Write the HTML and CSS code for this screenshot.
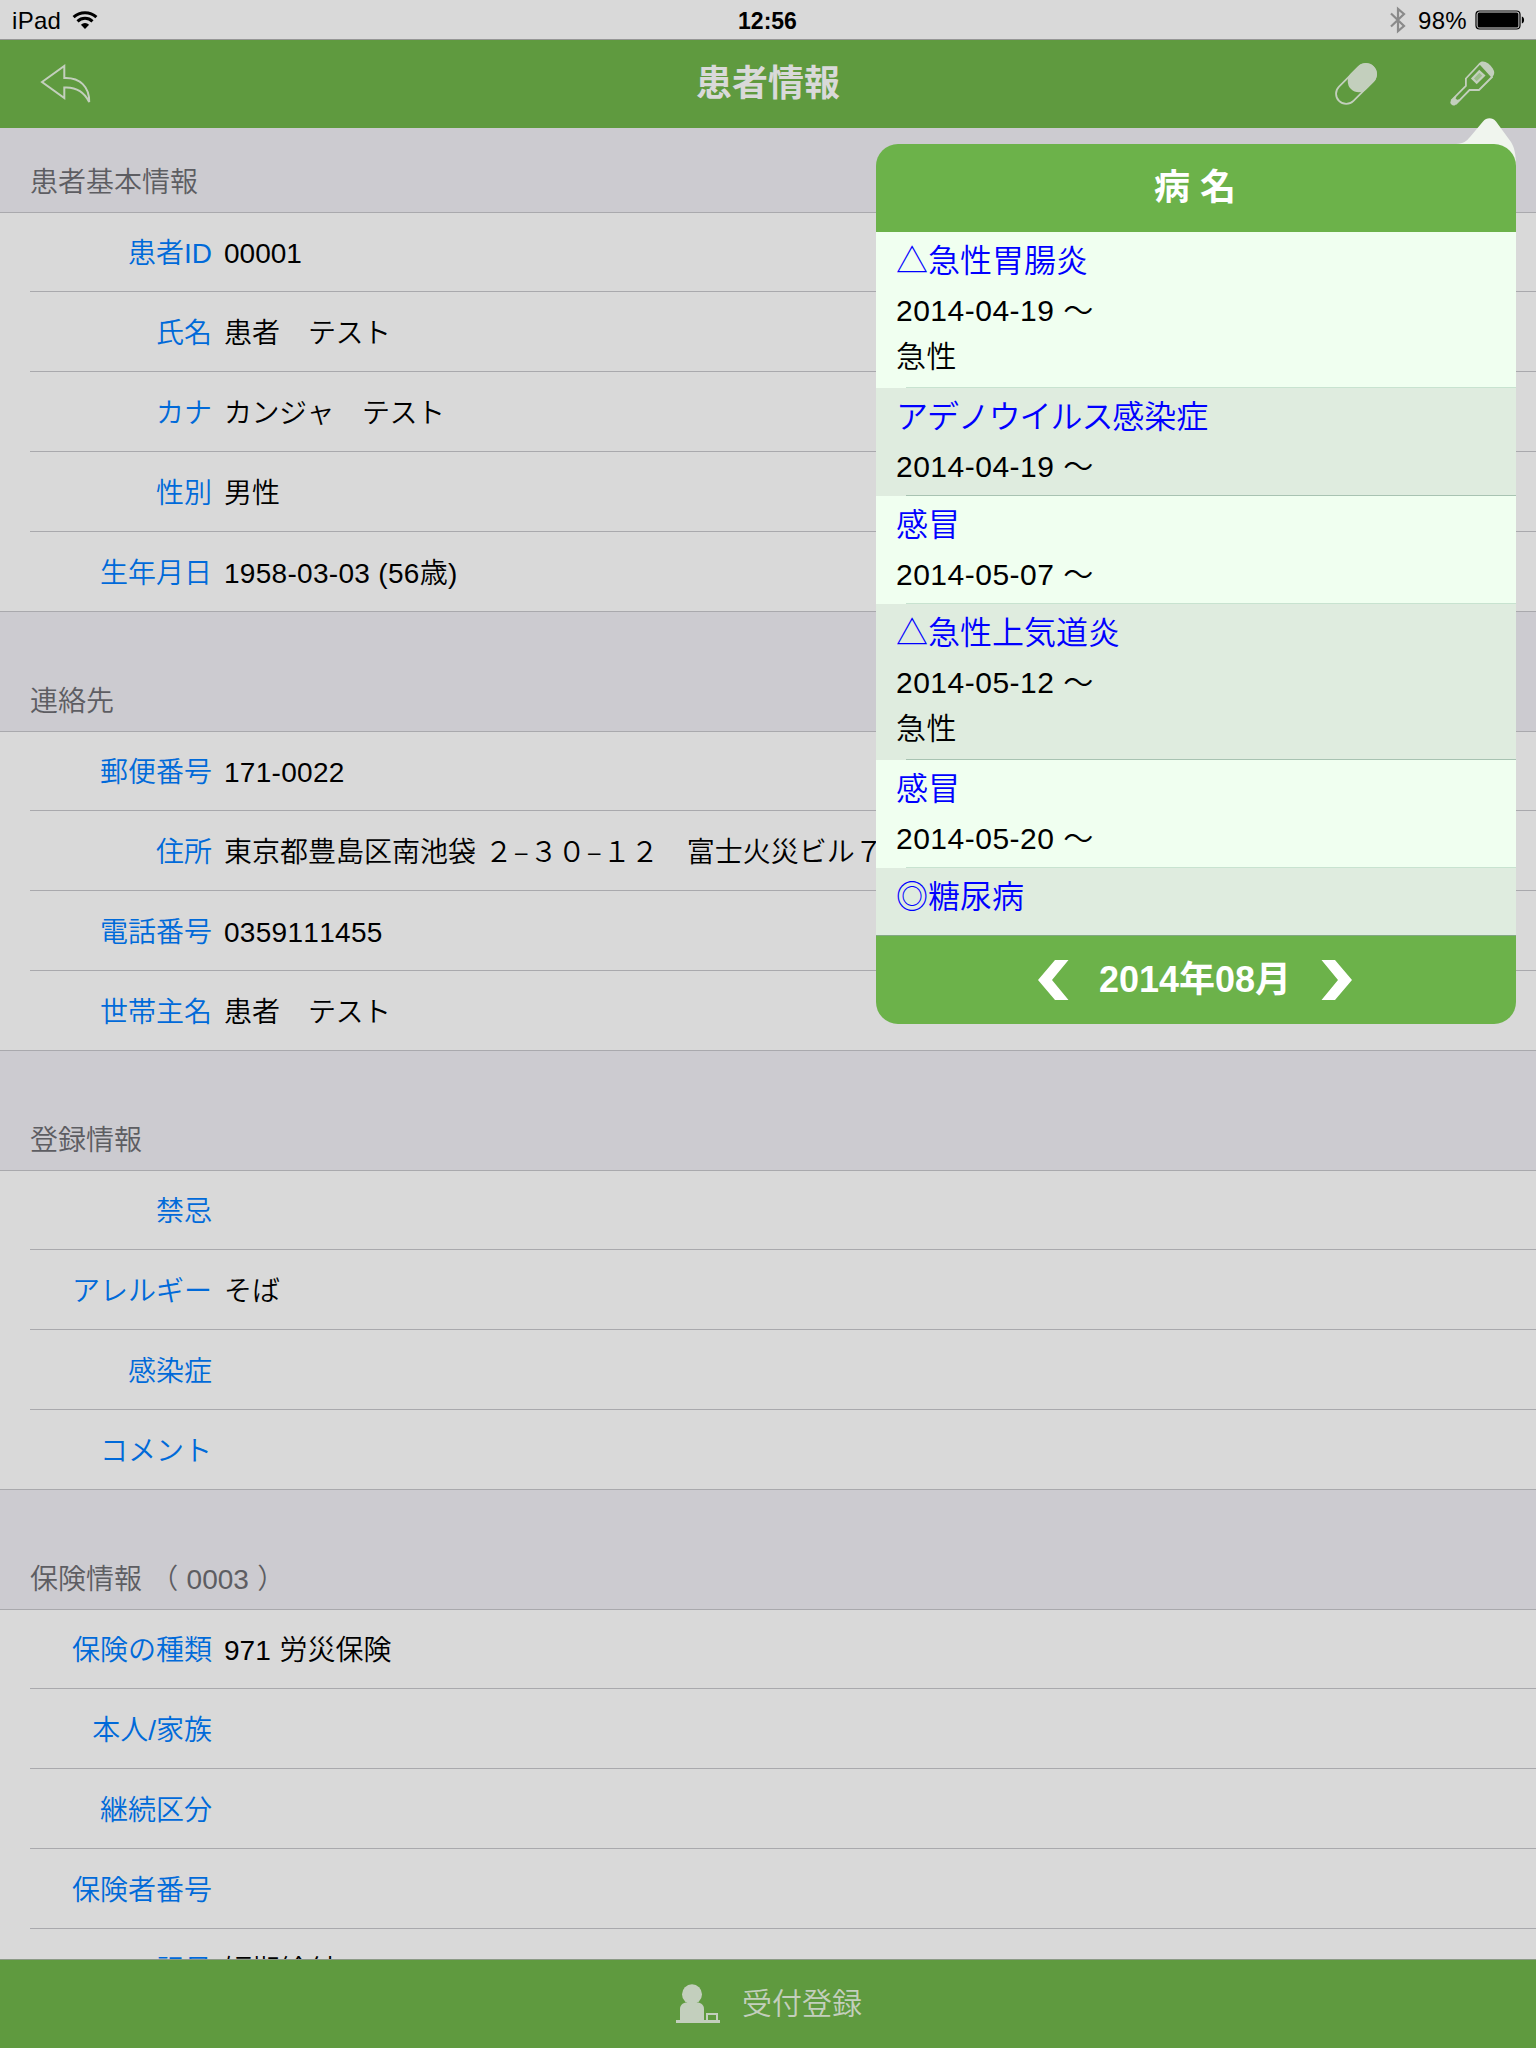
FILE: index.html
```html
<!DOCTYPE html>
<html lang="ja">
<head>
    <meta charset="UTF-8">
    <meta name="viewport" content="width=device-width, initial-scale=1.0">
    <title>患者情報</title>
    <link rel="stylesheet" href="styles.css">
</head>
<body>

    <div class="status-bar">
        <div class="status-left">
            <span>iPad</span>
            <svg class="wifi" width="26" height="20" viewBox="0 0 26 20">
                <path d="M1.6 7.2a16.5 16.5 0 0 1 22.8 0" fill="none" stroke="#000" stroke-width="3"/>
                <path d="M5.5 11.3a10.8 10.8 0 0 1 15 0" fill="none" stroke="#000" stroke-width="3"/>
                <path d="M8.9 14.7a6 6 0 0 1 8.2 0L13 19z"/>
            </svg>
        </div>
        <div class="clock">12:56</div>
        <div class="status-right">
            <svg class="bluetooth" width="16" height="28" viewBox="0 0 16 28">
                <path d="M1 7.500L14 20l-6 5.200V2.800L14 8 1 20.500" fill="none" stroke="#8a8a8a" stroke-width="2.200"/>
            </svg>
            <span>98%</span>
            <svg class="battery" width="50" height="20" viewBox="0 0 50 20">
                <rect x="1" y="1" width="44" height="18" rx="3.5" fill="none" stroke="#000" stroke-width="1.2"/>
                <rect x="2.6" y="2.6" width="40.8" height="14.8" rx="1.5"/>
                <path d="M46.8 6.5c3 .8 3 6.2 0 7z"/>
            </svg>
        </div>
    </div>

    <div class="nav-bar">
        <svg class="back" width="52" height="40" viewBox="0 0 52 40">
            <path d="M2 18L24.300 2v12C40 13.300 49.500 23 49.200 38C44 27.500 36 22.800 24.300 23.500V34z" fill="none" stroke="#c3cfbd" stroke-width="2"/>
        </svg>
        <h1>患者情報</h1>
        <div class="nav-icons">
            <svg class="pill" width="42" height="42" viewBox="0 0 42 42">
                <g transform="rotate(-45 21 21)">
                    <rect x="-3" y="10.800" width="48" height="20.400" rx="10.200" fill="none" stroke="#c3cfbd" stroke-width="1.800"/>
                    <path d="M25 9.900h10a11.100 11.100 0 0 1 0 22.200h-10a11.100 11.100 0 0 1 0-22.200z" fill="#c3cfbd"/>
                </g>
            </svg>
            <svg class="thermometer" width="46" height="46" viewBox="0 0 46 46">
                <g fill="none" stroke="#c3cfbd" stroke-width="1.800">
                    <path d="M31 2.500L16.900 17.500V25L2.300 39.600"/>
                    <path d="M43.500 15.500L30 29h-9.500L6.700 43.200"/>
                </g>
                <path d="M29.700 2.500C31.500.3 34 0 36.500 1c4 1.800 7 5 8.500 9 .8 2.500-.5 5-2.300 6.800z" fill="#c3cfbd"/>
                <path d="M1.800 39.600l4.400-4.400 4.400 4.400-4.200 4.400a3.300 3.300 0 0 1-4.600-4.400z" fill="#c3cfbd"/>
                <path d="M6.500 37.300l1.800 1.800 9-9.200-1.800-1.800z" fill="#5f9a3f"/>
                <path d="M30.300 10.200l4.700 4.400-7.300 7.200-4.300-4.300z" fill="#9cbe8a" stroke="#c3cfbd" stroke-width="2.200"/>
            </svg>
        </div>
    </div>

    <div class="content">
        <h2 class="first">患者基本情報</h2>
        <div class="group">
            <div class="row"><label>患者ID</label><span>00001</span></div>
            <div class="row"><label>氏名</label><span>患者　<span class="kana">テスト</span></span></div>
            <div class="row"><label>カナ</label><span><span class="kana">カンジャ</span>　<span class="kana">テスト</span></span></div>
            <div class="row"><label>性別</label><span>男性</span></div>
            <div class="row"><label>生年月日</label><span class="num">1958-03-03 (56歳)</span></div>
        </div>

        <h2>連絡先</h2>
        <div class="group">
            <div class="row"><label>郵便番号</label><span class="num">171-0022</span></div>
            <div class="row"><label>住所</label><span>東京都豊島区南池袋 <span class="banchi">２<i>–</i>３０<i>–</i>１２</span>　富士火災ビル７</span></div>
            <div class="row"><label>電話番号</label><span class="num">0359111455</span></div>
            <div class="row"><label>世帯主名</label><span>患者　<span class="kana">テスト</span></span></div>
        </div>

        <h2>登録情報</h2>
        <div class="group">
            <div class="row"><label>禁忌</label><span></span></div>
            <div class="row"><label>アレルギー</label><span>そば</span></div>
            <div class="row"><label>感染症</label><span></span></div>
            <div class="row"><label>コメント</label><span></span></div>
        </div>

        <h2>保険情報 （ 0003 ）</h2>
        <div class="group">
            <div class="row"><label>保険の種類</label><span>971 労災保険</span></div>
            <div class="row"><label>本人/家族</label><span></span></div>
            <div class="row"><label>継続区分</label><span></span></div>
            <div class="row"><label>保険者番号</label><span></span></div>
            <div class="row"><label>記号</label><span>短期給付</span></div>
        </div>
    </div>

    <div class="tool-bar">
        <svg class="reception" width="44" height="40" viewBox="0 0 44 40">
            <g fill="#c3cfbd">
                <circle cx="16" cy="10.300" r="10"/>
                <path d="M4 36V25c0-4 3-6.500 7-6.500h10c4 0 7 2.500 7 6.500v11z"/>
                <path d="M0 36h44v3H0z"/>
            </g>
            <path d="M31 37v-7h10v7" fill="none" stroke="#c3cfbd" stroke-width="2"/>
        </svg>
        <span>受付登録</span>
    </div>

    <div class="popover">
        <svg class="arrow" width="60" height="56" viewBox="0 0 60 56">
            <path d="M0 26C8 25.500 10 23.500 14 19L27 3.500C30.500-.8 36.500-.8 40 3.500L55 24C58 29 60 34 60 50L40 30z" fill="#f0f5ee"/>
        </svg>
        <div class="popover-box">
            <div class="popover-title">病 名</div>
            <div class="diseases">
                <div class="disease">
                    <h3>△急性胃腸炎</h3>
                    <p>2014-04-19 〜</p>
                    <p>急性</p>
                </div>
                <div class="disease">
                    <h3><span class="kana">アデノウイルス</span>感染症</h3>
                    <p>2014-04-19 〜</p>
                </div>
                <div class="disease">
                    <h3>感冒</h3>
                    <p>2014-05-07 〜</p>
                </div>
                <div class="disease">
                    <h3>△急性上気道炎</h3>
                    <p>2014-05-12 〜</p>
                    <p>急性</p>
                </div>
                <div class="disease">
                    <h3>感冒</h3>
                    <p>2014-05-20 〜</p>
                </div>
                <div class="disease">
                    <h3>◎糖尿病</h3>
                    <p>2014-05-20 〜</p>
                </div>
            </div>
            <div class="popover-footer">
                <svg width="31" height="40" viewBox="0 0 31 40"><path d="M17 0h13.500L14 20l16.500 20H17L0 20z" fill="#fff"/></svg>
                <span>2014年08月</span>
                <svg width="31" height="40" viewBox="0 0 31 40"><path d="M14 0H.5L17 20 .5 40H14l17-20z" fill="#fff"/></svg>
            </div>
        </div>
    </div>

</body>
</html>
```
FILE: styles.css
```css
* {
    box-sizing: border-box;
}
body {
    margin: 0;
    width: 1536px;
    height: 2048px;
    overflow: hidden;
    position: relative;
    display: flex;
    flex-direction: column;
    background: #cccbd0;
    font-family: "Liberation Sans", "Noto Sans CJK JP", sans-serif;
    font-size: 28px;
    font-kerning: none;
    color: #000;
}
h1, h2, h3, p {
    margin: 0;
    font-weight: normal;
}
svg {
    display: block;
    flex: none;
}

/* status bar */
.status-bar {
    flex: none;
    display: grid;
    grid-template-columns: 1fr auto 1fr;
    align-items: center;
    height: 40px;
    padding: 1px 11px 0 12px;
    background: #d9d9d9;
    border-bottom: 1px solid #969696;
    font-size: 24px;
}
.status-left, .status-right {
    display: flex;
    align-items: center;
}
.status-left span, .status-right span {
    letter-spacing: 0.3px;
    padding-top: 2px;
}
.wifi {
    margin-left: 11px;
}
.clock {
    padding: 2px 2px 0 0;
    font-weight: bold;
    font-size: 23px;
}
.status-right {
    justify-content: flex-end;
}
.bluetooth {
    margin-right: 12px;
}
.battery {
    margin-left: 8px;
}

/* navigation bar */
.nav-bar {
    flex: none;
    display: grid;
    grid-template-columns: 1fr auto 1fr;
    align-items: center;
    height: 88px;
    padding: 0 40px;
    background: #5f9a3f;
}
.nav-bar h1 {
    font-size: 36px;
    font-weight: bold;
    line-height: 88px;
    color: #d9d9d9;
}
.nav-icons {
    display: flex;
    justify-content: flex-end;
    align-items: center;
    padding: 0 1px 1px 0;
}
.thermometer {
    margin-left: 72px;
}

/* patient list */
.content {
    flex: 1;
    min-height: 0;
    overflow: hidden;
}
.content h2 {
    height: 119px;
    padding: 70px 0 0 30px;
    font-size: 28px;
    font-weight: 350;
    line-height: 40px;
    word-spacing: 0.5px;
    color: #5d5d62;
}
.content h2.first {
    height: 84px;
    padding-top: 35px;
}
.group {
    background: #d9d9d9;
    box-shadow: inset 0 1px #a9a9ad, inset 0 -1px #a9a9ad;
}
.row {
    display: flex;
    height: 80px;
    margin-left: 30px;
    padding-top: 4px;
    border-bottom: 1px solid #a9a9ad;
    font-weight: 350;
    line-height: 76px;
    word-spacing: 1px;
    white-space: nowrap;
}
.row label {
    width: 182px;
    margin-right: 12px;
    text-align: right;
    color: #006ad9;
}
.kana {
    letter-spacing: -0.5px;
}
.num {
    letter-spacing: 0.3px;
    word-spacing: 0;
}
.banchi i {
    font-family: "Noto Sans CJK JP", sans-serif;
    font-style: normal;
    line-height: 0;
    padding: 0 1px;
}

/* bottom bar */
.tool-bar {
    flex: none;
    display: flex;
    justify-content: center;
    align-items: center;
    height: 89px;
    padding-left: 2px;
    background: #5f9a3f;
    border-top: 1px solid #8c9a86;
    color: #c3cfbd;
    font-size: 30px;
    font-weight: 350;
    line-height: 84px;
}
.reception {
    margin-right: 22px;
}

/* disease popover */
.popover {
    position: absolute;
    left: 876px;
    top: 144px;
    width: 640px;
}
.arrow {
    position: absolute;
    right: 0;
    top: -26px;
}
.popover-box {
    position: relative;
    height: 880px;
    display: flex;
    flex-direction: column;
    border-radius: 22px;
    overflow: hidden;
    background: #6cb24a;
}
.popover-title {
    flex: none;
    height: 88px;
    padding-right: 2px;
    line-height: 88px;
    text-align: center;
    font-size: 36px;
    font-weight: bold;
    color: #fff;
}
.diseases {
    flex: 1;
    min-height: 0;
    overflow: hidden;
}
.disease {
    position: relative;
    padding: 6px 20px 6px;
    background: #f0fff0;
}
.disease:nth-child(even) {
    background: #dfecdf;
}
.disease::after {
    content: "";
    position: absolute;
    left: 30px;
    right: 0;
    bottom: 0;
    height: 1px;
    background: #c8e3d0;
}
.disease:nth-child(even)::after {
    background: #a8c3b2;
}
.disease h3 {
    font-size: 32px;
    font-weight: 350;
    line-height: 47px;
    height: 50px;
    color: #0000ff;
}
.disease h3 .kana {
    letter-spacing: -1.1px;
}
.disease p {
    font-size: 30px;
    font-weight: 350;
    line-height: 46px;
    height: 46px;
    letter-spacing: 0.5px;
}
.disease p + p {
    height: 48px;
}
.popover-footer {
    flex: none;
    display: flex;
    justify-content: center;
    align-items: center;
    height: 89px;
    padding-right: 2px;
    border-top: 1px solid #83a884;
    color: #fff;
    font-size: 36px;
    font-weight: bold;
    line-height: 86px;
}
.popover-footer span {
    margin: 0 30px;
}
```
